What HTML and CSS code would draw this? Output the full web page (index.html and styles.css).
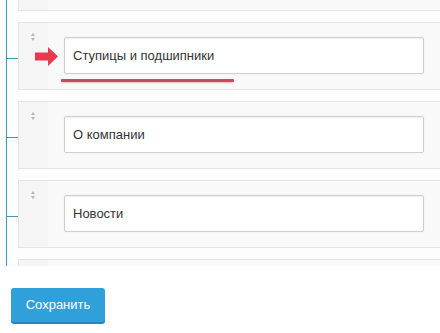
FILE: index.html
```html
<!DOCTYPE html>
<html>
<head>
<meta charset="utf-8">
<link rel="stylesheet" href="styles.css">
</head>
<body>
<div class="tree">
  <div class="list">
    <div class="card">
      <div class="handle"><span class="sort"></span></div>
      <div class="body"><div class="field"></div></div>
    </div>
    <div class="card">
      <div class="handle"><span class="sort"></span></div>
      <div class="body">
        <div class="field">Ступицы и подшипники</div>
        <span class="arrow"><svg width="23" height="19" viewBox="0 0 23 19"><path d="M0 5.5h13V0l10 9.5L13 19v-5.5H0z" fill="#e8394f"/></svg></span>
        <span class="underline"></span>
      </div>
    </div>
    <div class="card">
      <div class="handle"><span class="sort"></span></div>
      <div class="body"><div class="field">О компании</div></div>
    </div>
    <div class="card">
      <div class="handle"><span class="sort"></span></div>
      <div class="body"><div class="field">Новости</div></div>
    </div>
    <div class="card">
      <div class="handle"><span class="sort"></span></div>
      <div class="body"><div class="field"></div></div>
    </div>
  </div>
</div>
<div class="footer">
  <button class="btn">Сохранить</button>
</div>
</body>
</html>
```
FILE: styles.css
```css
html, body {
  margin: 0;
  padding: 0;
  background: #fff;
  overflow: hidden;
  width: 440px;
  height: 333px;
  font-family: "Liberation Sans", Arial, sans-serif;
}
.tree {
  height: 266px;
  overflow: hidden;
  position: relative;
  background: #fdfdfd;
}
.tree::before {
  content: "";
  position: absolute;
  left: 6px;
  top: 0;
  bottom: 0;
  width: 1px;
  background: #3a9db2;
}
.list {
  margin-top: -57px;
  padding-left: 18px;
  display: flex;
  flex-direction: column;
  gap: 11px;
}
.card {
  position: relative;
  width: 440px;
  height: 68px;
  box-sizing: border-box;
  border: 1px solid #e4e4e4;
  background: #f9f9f9;
  display: flex;
}
.card::before {
  content: "";
  position: absolute;
  left: -12px;
  top: 35px;
  width: 11px;
  height: 1px;
  background: #3a9db2;
}
.handle {
  width: 29px;
  background: #f5f5f5;
  display: flex;
  justify-content: center;
  padding-top: 10px;
  box-sizing: border-box;
}
.sort {
  display: block;
  width: 5px;
  height: 8px;
  position: relative;
}
.sort::before, .sort::after {
  content: "";
  position: absolute;
  left: 0;
  border-left: 2.5px solid transparent;
  border-right: 2.5px solid transparent;
}
.sort::before {
  top: 0;
  border-bottom: 3px solid #b5b5b5;
}
.sort::after {
  bottom: 0;
  border-top: 3px solid #b5b5b5;
}
.body {
  position: relative;
  padding: 14px 0 0 16px;
}
.field {
  width: 360px;
  height: 37px;
  box-sizing: border-box;
  border: 1px solid #cfcfcf;
  border-radius: 2px;
  background: #fff;
  box-shadow: inset 0 1px 1px rgba(0,0,0,0.06), 0 0 3px rgba(0,0,0,0.04);
  padding: 0 8px;
  font-size: 13px;
  line-height: 35px;
  color: #333;
}
.arrow {
  position: absolute;
  left: -13px;
  top: 24px;
  display: block;
  line-height: 0;
}
.underline {
  position: absolute;
  left: 13px;
  top: 56px;
  width: 173px;
  height: 3px;
  background: #c9495d;
  box-shadow: 0 1px 2px rgba(201,73,93,0.35);
  border-radius: 1px;
}
.footer {
  padding: 22px 0 0 11px;
  background: #fff;
}
.btn {
  width: 94px;
  height: 36px;
  border: none;
  border-bottom: 2px solid #2586ba;
  border-radius: 3px;
  background: #2fa0da;
  color: #fff;
  font-family: "Liberation Sans", Arial, sans-serif;
  font-size: 13px;
  line-height: 34px;
  padding: 0;
  white-space: nowrap;
}
```
